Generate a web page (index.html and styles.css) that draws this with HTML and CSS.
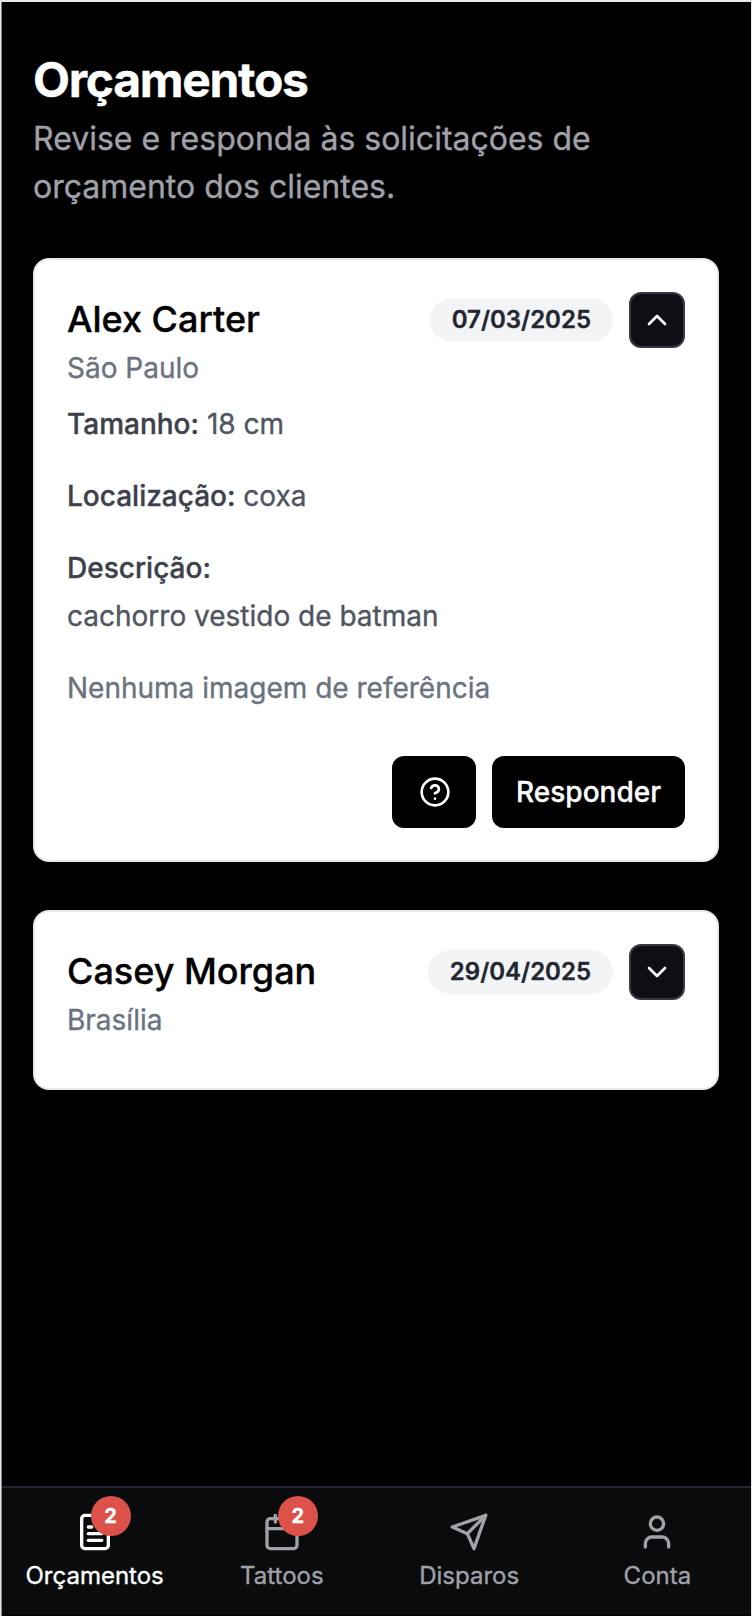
FILE: index.html
```html
<!DOCTYPE html>
<html lang="pt-BR">
<head>
<meta charset="utf-8">
<title>Orçamentos</title>
<link rel="stylesheet" href="styles.css">
</head>
<body>
<div class="app">
  <main class="content">
    <header class="page-header">
      <h1 class="page-title">Orçamentos</h1>
      <p class="page-subtitle">Revise e responda às solicitações de orçamento dos clientes.</p>
    </header>
    <section class="list">
      <article class="card">
        <div class="card-header">
          <div>
            <h2 class="name">Alex Carter</h2>
            <p class="city">São Paulo</p>
          </div>
          <div class="card-meta">
            <span class="date">07/03/2025</span>
            <button class="toggle" aria-label="Recolher"><svg class="icon-sm" viewBox="0 0 24 24"><path d="m18 15-6-6-6 6"/></svg></button>
          </div>
        </div>
        <div class="details">
          <p><strong>Tamanho:</strong> 18 cm</p>
          <p><strong>Localização:</strong> coxa</p>
          <div class="description">
            <p><strong>Descrição:</strong></p>
            <p>cachorro vestido de batman</p>
          </div>
          <p class="muted">Nenhuma imagem de referência</p>
        </div>
        <div class="actions">
          <button class="btn btn-help" aria-label="Ajuda"><svg class="icon-sm" viewBox="0 0 24 24"><circle cx="12" cy="12" r="10"/><path d="M9.09 9a3 3 0 0 1 5.83 1c0 2-3 3-3 3"/><path d="M12 17h.01"/></svg></button>
          <button class="btn">Responder</button>
        </div>
      </article>
      <article class="card">
        <div class="card-header">
          <div>
            <h2 class="name">Casey Morgan</h2>
            <p class="city">Brasília</p>
          </div>
          <div class="card-meta">
            <span class="date">29/04/2025</span>
            <button class="toggle" aria-label="Expandir"><svg class="icon-sm" viewBox="0 0 24 24"><path d="m6 9 6 6 6-6"/></svg></button>
          </div>
        </div>
      </article>
    </section>
  </main>
  <nav class="tabbar">
    <a class="tab active">
      <span class="tab-icon">
        <svg class="icon-lg" viewBox="0 0 24 24"><path d="M15 2H6a2 2 0 0 0-2 2v16a2 2 0 0 0 2 2h12a2 2 0 0 0 2-2V7Z"/><path d="M14 2v4a2 2 0 0 0 2 2h4"/><path d="M10 9H8"/><path d="M16 13H8"/><path d="M16 17H8"/></svg>
        <span class="count">2</span>
      </span>
      <span>Orçamentos</span>
    </a>
    <a class="tab">
      <span class="tab-icon">
        <svg class="icon-lg" viewBox="0 0 24 24"><path d="M8 2v4"/><path d="M16 2v4"/><rect width="18" height="18" x="3" y="4" rx="2"/><path d="M3 10h18"/></svg>
        <span class="count">2</span>
      </span>
      <span>Tattoos</span>
    </a>
    <a class="tab">
      <span class="tab-icon"><svg class="icon-lg" viewBox="0 0 24 24"><path d="m22 2-7 20-4-9-9-4Z"/><path d="M22 2 11 13"/></svg></span>
      <span>Disparos</span>
    </a>
    <a class="tab">
      <span class="tab-icon"><svg class="icon-lg" viewBox="0 0 24 24"><path d="M19 21v-2a4 4 0 0 0-4-4H9a4 4 0 0 0-4 4v2"/><circle cx="12" cy="7" r="4"/></svg></span>
      <span>Conta</span>
    </a>
  </nav>
</div>
</body>
</html>
```
FILE: styles.css
```css
* { box-sizing: border-box; margin: 0; padding: 0; }

body {
  padding: 2px 1px 0 1px;
  background: #e5e7eb;
  font-family: Inter, "Liberation Sans", sans-serif;
  -webkit-text-stroke: 0.35px currentColor;
}

.app {
  display: flex;
  flex-direction: column;
  height: 1614px;
  border-left: 1px solid #85878a;
  background: #000;
}

.content { flex: 1; padding: 46px 32px 0 31px; }

.page-header { margin-bottom: 47px; }

.page-title {
  padding-bottom: 3px;
  color: #fff;
  font-size: 48px;
  line-height: 64px;
  font-weight: 700;
  letter-spacing: -1.3px;
}

.page-subtitle { color: #a1a1aa; font-size: 32px; line-height: 48px; }

.list { display: flex; flex-direction: column; gap: 48px; }

.card {
  padding: 32px;
  border: 2px solid #e5e7eb;
  border-radius: 16px;
  background: #fff;
}

.card-header {
  display: flex;
  justify-content: space-between;
  align-items: flex-start;
  padding-bottom: 16px;
}

.name {
  padding-bottom: 2px;
  color: #000;
  font-size: 36px;
  line-height: 54px;
  font-weight: 500;
}

.city { color: #6b7280; font-size: 28px; line-height: 40px; }

.card-meta { display: flex; align-items: center; gap: 16px; }

.date {
  padding: 6px 22px;
  border-radius: 22px;
  background: #f3f4f6;
  color: #22262f;
  font-size: 24px;
  line-height: 32px;
  font-weight: 600;
}

button { font-family: inherit; border: 0; }

.toggle {
  display: flex;
  align-items: center;
  justify-content: center;
  width: 56px;
  height: 56px;
  border: 2px solid #373a45;
  border-radius: 12px;
  background: #0d0f14;
  color: #fff;
}

svg {
  display: block;
  fill: none;
  stroke: currentColor;
  stroke-width: 2;
  stroke-linecap: round;
  stroke-linejoin: round;
}

.icon-sm { width: 32px; height: 32px; }
.icon-lg { width: 40px; height: 40px; }

.details {
  display: flex;
  flex-direction: column;
  gap: 32px;
  color: #50555f;
  font-size: 28px;
  line-height: 40px;
}

.details strong { color: #3c414c; font-weight: 500; }
.description { display: flex; flex-direction: column; gap: 8px; }
.details .muted { color: #6b7280; }

.actions {
  display: flex;
  justify-content: flex-end;
  gap: 16px;
  margin-top: 48px;
}

.btn {
  display: flex;
  align-items: center;
  height: 72px;
  padding: 0 24px;
  border-radius: 12px;
  background: #000;
  color: #fff;
  font-size: 28px;
  font-weight: 500;
}

.btn-help { padding: 0 25px 0 27px; }

.tabbar {
  display: grid;
  grid-template-columns: repeat(4, 1fr);
  height: 130px;
  border-top: 2px solid #22272f;
  border-bottom: 1px solid #000;
  background: #0a0b0d;
}

.tab {
  display: flex;
  flex-direction: column;
  align-items: center;
  gap: 8px;
  padding: 24px 2px 0 0;
  color: #a1a1aa;
  font-size: 24px;
  line-height: 32px;
}

.tab:last-child { padding-right: 0; }

.active { color: #fff; }

.tab-icon { position: relative; }

.count {
  position: absolute;
  top: -16px;
  right: -16px;
  width: 40px;
  height: 40px;
  border-radius: 50%;
  background: #dc524a;
  color: #fff;
  font-size: 20px;
  font-weight: 700;
  line-height: 40px;
  text-align: center;
}
```
